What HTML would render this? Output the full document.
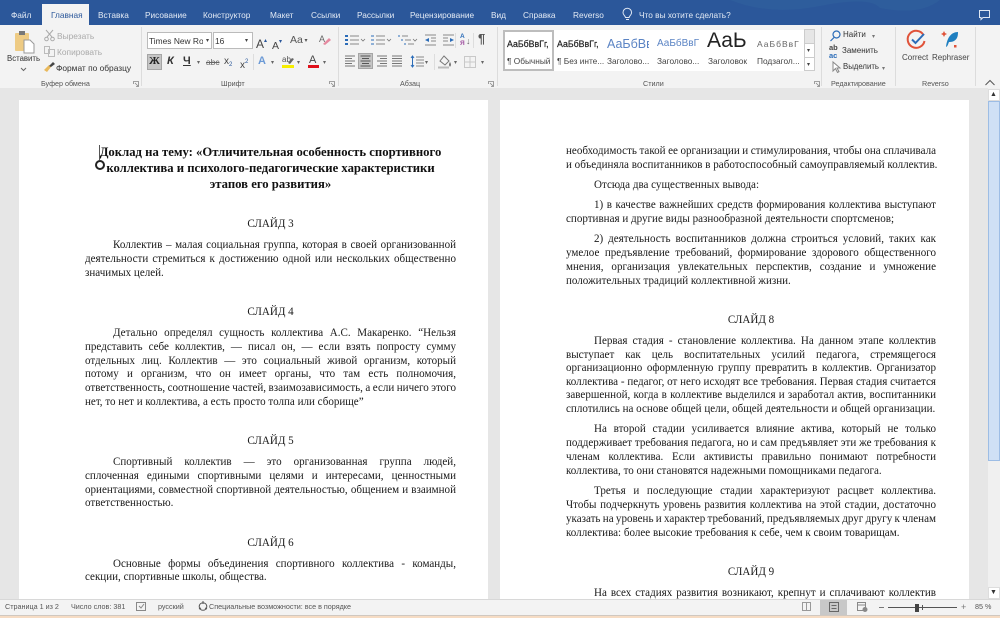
<!DOCTYPE html>
<html lang="ru"><head><meta charset="utf-8"><title>Word</title>
<style>
html,body{margin:0;padding:0;width:1000px;height:618px;overflow:hidden;background:#e6e6e6}
*{box-sizing:border-box}
#r{position:relative;width:1000px;height:618px;overflow:hidden;font-family:"Liberation Sans",sans-serif;filter:blur(.3px)}
.a{position:absolute}
.u{position:absolute;white-space:nowrap;font-size:8.4px;line-height:12px;color:#444}
.e{font-size:8px}
.x{font-size:7.2px;color:#555}
.t{position:absolute;top:9px;white-space:nowrap;font-size:8.3px;line-height:12px;color:#e4ebf5}
.g{position:absolute;top:78px;font-size:7.2px;line-height:11px;color:#555;white-space:nowrap}
.s{position:absolute;top:27px;width:1px;height:59px;background:#dcdcdc}
.p{position:absolute;background:#fff;top:100px;width:469px;height:499px}
.l,.c,.j{position:absolute;font-family:"Liberation Serif",serif;font-size:11.05px;line-height:14px;color:#1a1a1a;white-space:nowrap}
.j{text-align:justify;text-align-last:justify;white-space:normal;height:14px;overflow:hidden;word-spacing:-1px}
.c{text-align:center}
.b{font-weight:bold;font-size:12.7px;line-height:16px;color:#111}
svg{position:absolute;overflow:visible}
</style></head><body><div id="r">

<div class="a" style="left:0;top:0;width:1000px;height:25px;background:#2b579a"></div>
<svg style="left:700px;top:0" width="300" height="25"><path d="M30 0q40 16 90 6t60 2q40 8 60-8z" fill="#30609f" opacity=".6"/></svg>
<div class="a" style="left:0;top:25px;width:1000px;height:63px;background:#f3f3f3"></div>
<div class="a" style="left:42px;top:4px;width:47px;height:21px;background:#f3f3f3"></div>

<div class="t" style="left:11px">Файл</div>
<div class="t" style="left:51px;color:#2b579a">Главная</div>
<div class="t" style="left:98px">Вставка</div>
<div class="t" style="left:145px">Рисование</div>
<div class="t" style="left:203px">Конструктор</div>
<div class="t" style="left:270px">Макет</div>
<div class="t" style="left:311px">Ссылки</div>
<div class="t" style="left:357px">Рассылки</div>
<div class="t" style="left:410px">Рецензирование</div>
<div class="t" style="left:491px">Вид</div>
<div class="t" style="left:523px">Справка</div>
<div class="t" style="left:573px">Reverso</div>
<svg style="left:622px;top:8px" width="11" height="13" fill="none" stroke="#dfe7f3" stroke-width="1"><path d="M3.500 9.500C3 7.500 1 7 1 4.500a4.300 4.300 0 0 1 8.600 0c0 2.500-2 3-2.500 5zM4 11.500h3"/></svg>
<div class="t" style="left:639px">Что вы хотите сделать?</div>
<svg style="left:979px;top:10px" width="12" height="11" fill="none" stroke="#dfe7f3"><path d="M.5.500h10v7H4L2 9.500v-2H.5z"/></svg>

<!-- clipboard -->
<svg style="left:14px;top:30px" width="22" height="24"><rect x="1" y="3" width="14" height="18" rx="1" fill="#eecb84"/><rect x="5" y="1" width="6" height="4" fill="#777"/><path d="M10 10h6l4 4v9H10z" fill="#fff" stroke="#999"/></svg>
<div class="u" style="left:7px;top:53px;color:#333;font-size:7.800px">Вставить</div>
<svg style="left:21px;top:68px" width="5" height="3" fill="none" stroke="#666"><path d="M0 0l2.500 2.500L5 0"/></svg>
<svg style="left:44px;top:30px" width="11" height="11" fill="none" stroke="#aaa"><path d="M2 0l6 7M9 0L3 7"/><circle cx="2.500" cy="9" r="1.800"/><circle cx="8.500" cy="9" r="1.800"/></svg>
<div class="u" style="left:57px;top:30px;color:#aaa">Вырезать</div>
<svg style="left:44px;top:46px" width="11" height="11" fill="none" stroke="#bbb"><path d="M.5.500h5v7h-5zM4.500 3.500h6v7h-6z" fill="#f3f3f3"/></svg>
<div class="u" style="left:57px;top:46px;color:#aaa">Копировать</div>
<svg style="left:44px;top:62px" width="11" height="10"><path d="M0 8l5-5 2 2-4 5z" fill="#e9b95c"/><path d="M5 4l4-4 2 2-4 3z" fill="#444"/></svg>
<div class="u" style="left:56px;top:62px;color:#333">Формат по образцу</div>
<div class="g" style="left:41px">Буфер обмена</div>
<svg style="left:133px;top:81px" width="6" height="6" fill="none" stroke="#888" stroke-width=".8"><path d="M.5 3V.5H5.500V5.500H3M2 2l3 3"/></svg>
<div class="s" style="left:141px"></div>

<!-- font -->
<div class="a" style="left:147px;top:32px;width:65px;height:17px;background:#fff;border:1px solid #bbb"></div>
<div class="u" style="left:149px;top:35px;width:54px;overflow:hidden;color:#333">Times New Roman</div>
<div class="u" style="left:206px;top:35px;font-size:6px">▾</div>
<div class="a" style="left:213px;top:32px;width:40px;height:17px;background:#fff;border:1px solid #bbb"></div>
<div class="u" style="left:215px;top:35px;color:#333">16</div>
<div class="u" style="left:245px;top:35px;font-size:6px">▾</div>
<div class="u" style="left:256px;top:35px;font-size:12px;color:#444">A<span style="font-size:6px;vertical-align:6px;color:#2b579a">▴</span></div>
<div class="u" style="left:272px;top:36px;font-size:10.500px;color:#444">A<span style="font-size:6px;vertical-align:6px;color:#2b579a">▾</span></div>
<div class="u" style="left:290px;top:34px;font-size:10.500px;color:#555">Aa<span style="font-size:6px;vertical-align:1px"> ▾</span></div>
<svg style="left:319px;top:33px" width="12" height="13"><text x="0" y="9" font-size="9" fill="#666" font-family="Liberation Sans">A</text><path d="M4 11l6-6 2 2-6 5z" fill="#e58aa0"/></svg>

<div class="a" style="left:147px;top:54px;width:15px;height:16px;background:#c5c5c5;border:1px solid #a5a5a5"></div>
<div class="u" style="left:149px;top:55px;font-size:11px;font-weight:bold;color:#222;font-family:'Liberation Serif',serif">Ж</div>
<div class="u" style="left:167px;top:55px;font-size:11px;font-weight:bold;font-style:italic;color:#333">К</div>
<div class="u" style="left:183px;top:55px;font-size:11px;font-weight:bold;color:#333;text-decoration:underline">Ч</div>
<div class="u" style="left:197px;top:57px;font-size:6px;color:#666">▾</div>
<div class="u" style="left:206px;top:56px;color:#666;text-decoration:line-through">abc</div>
<div class="u" style="left:224px;top:56px;font-size:10px;color:#444">x<span style="font-size:6px;vertical-align:-2px;color:#2b579a">2</span></div>
<div class="u" style="left:240px;top:56px;font-size:10px;color:#444">x<span style="font-size:6px;vertical-align:5px;color:#2b579a">2</span></div>
<div class="a" style="left:253px;top:54px;width:1px;height:16px;background:#ddd"></div>
<div class="u" style="left:258px;top:55px;font-size:11px;color:#6c9ad6;font-weight:bold">A</div>
<div class="u" style="left:271px;top:57px;font-size:6px;color:#666">▾</div>
<div class="u" style="left:282px;top:54px;font-size:8px;color:#555">ab</div>
<svg style="left:282px;top:57px" width="12" height="11"><path d="M6 6l4-5 2 1-4 5z" fill="#666"/><rect y="8" width="12" height="3" fill="#f6ee00"/></svg>
<div class="u" style="left:297px;top:57px;font-size:6px;color:#666">▾</div>
<div class="u" style="left:309px;top:54px;font-size:11px;color:#444">A</div>
<div class="a" style="left:308px;top:65px;width:11px;height:3px;background:#e0101a"></div>
<div class="u" style="left:323px;top:57px;font-size:6px;color:#666">▾</div>
<div class="g" style="left:221px">Шрифт</div>
<svg style="left:329px;top:81px" width="6" height="6" fill="none" stroke="#888" stroke-width=".8"><path d="M.5 3V.5H5.500V5.500H3M2 2l3 3"/></svg>
<div class="s" style="left:338px"></div>

<!-- paragraph -->
<svg style="left:344px;top:34px" width="135" height="13" fill="none" stroke="#888" stroke-width="1">
<path d="M6 2h9M6 6h9M6 10h9M32 2h9M32 6h9M32 10h9M58 2h6M61 6h6M64 10h6"/>
<path d="M1 2h3M1 6h3M1 10h3" stroke="#2b6cb8" stroke-width="2"/>
<path d="M27 2h3M27 6h3M27 10h3M54 2h2M57 6h2M60 10h2" stroke="#2b6cb8"/>
<path d="M81 1h11M87 4h5M87 7h5M81 11h11M99 1h11M99 4h5M99 7h5M99 11h11"/>
<path d="M81 6l4-2v4zM110 6l-4-2v4z" fill="#2b6cb8" stroke="none"/>
</svg>
<svg style="left:361px;top:39px" width="86" height="4" fill="none" stroke="#777" stroke-width=".8"><path d="M0 0l2 2 2-2M26 0l2 2 2-2M52 0l2 2 2-2"/></svg>
<div class="u" style="left:460px;top:33px;font-size:6.500px;line-height:7px;color:#2b6cb8;font-weight:bold">A<br><span style="color:#a050a0">Я</span></div>
<div class="u" style="left:466px;top:35px;font-size:9px;color:#666">↓</div>
<div class="u" style="left:478px;top:33px;font-size:13px;font-weight:bold;color:#555">¶</div>
<div class="a" style="left:455px;top:33px;width:1px;height:15px;background:#ddd"></div>
<div class="a" style="left:473px;top:33px;width:1px;height:15px;background:#ddd"></div>

<div class="a" style="left:358px;top:53px;width:15px;height:16px;background:#c5c5c5;border:1px solid #a5a5a5"></div>
<svg style="left:345px;top:55px" width="55" height="12" fill="none" stroke="#777" stroke-width="1">
<path d="M0 1h10M0 3.500h7M0 6h10M0 8.500h7M0 11h10"/>
<path d="M15.500 1h10M17 3.500h7M15.500 6h10M17 8.500h7M15.500 11h10" stroke="#555"/>
<path d="M32 1h10M35 3.500h7M32 6h10M35 8.500h7M32 11h10"/>
<path d="M47 1h10M47 3.500h10M47 6h10M47 8.500h10M47 11h10"/>
</svg>
<svg style="left:410px;top:55px" width="14" height="13" fill="none" stroke="#888"><path d="M6 2h8M6 5h8M6 8h8M6 11h8"/><path d="M2.500 1v11M1 3l1.500-2L4 3M1 10l1.500 2L4 10" stroke="#2b6cb8"/></svg>
<div class="u" style="left:425px;top:57px;font-size:6px;color:#666">▾</div>
<div class="a" style="left:434px;top:54px;width:1px;height:16px;background:#ddd"></div>
<svg style="left:438px;top:55px" width="14" height="14" fill="none" stroke="#777"><path d="M6 1l5 5-4 4-5-4z"/><path d="M12 8q1 2 0 3-1-1 0-3z" fill="#777"/><path d="M0 12.500h11" stroke="#bbb" stroke-width="2"/></svg>
<div class="u" style="left:454px;top:57px;font-size:6px;color:#666">▾</div>
<svg style="left:464px;top:56px" width="12" height="12" fill="none" stroke="#c8c8c8"><path d="M.5.500h11v11H.5zM6 .5v11M.5 6h11"/></svg>
<div class="u" style="left:481px;top:57px;font-size:6px;color:#666">▾</div>
<div class="g" style="left:400px">Абзац</div>
<svg style="left:488px;top:81px" width="6" height="6" fill="none" stroke="#888" stroke-width=".8"><path d="M.5 3V.5H5.500V5.500H3M2 2l3 3"/></svg>
<div class="s" style="left:497px"></div>

<!-- styles -->
<div class="a" style="left:503px;top:30px;width:301px;height:41px;background:#fff"></div>
<div class="a" style="left:503px;top:30px;width:51px;height:41px;background:#fff;border:2px solid #bdbdbd"></div>
<div class="u" style="left:507px;top:38px;font-size:8.800px;color:#222;-webkit-text-stroke:.2px #222">АаБбВвГг,</div>
<div class="u" style="left:507px;top:55px;font-size:8.300px">¶ Обычный</div>
<div class="u" style="left:557px;top:38px;font-size:8.800px;color:#222;-webkit-text-stroke:.2px #222">АаБбВвГг,</div>
<div class="u" style="left:557px;top:55px;font-size:8.300px">¶ Без инте...</div>
<div class="u" style="left:607px;top:36px;font-size:12.500px;line-height:16px;width:42px;overflow:hidden;color:#5b84c4">АаБбВв</div>
<div class="u" style="left:607px;top:55px;font-size:8.300px">Заголово...</div>
<div class="u" style="left:657px;top:37px;font-size:10px;line-height:14px;width:44px;overflow:hidden;color:#5b84c4">АаБбВвГ</div>
<div class="u" style="left:657px;top:55px;font-size:8.300px">Заголово...</div>
<div class="u" style="left:707px;top:29px;font-size:21px;line-height:24px;color:#222">АаЬ</div>
<div class="u" style="left:708px;top:55px;font-size:8.300px">Заголовок</div>
<div class="u" style="left:757px;top:38px;font-size:8.500px;letter-spacing:1px;width:44px;overflow:hidden;color:#666">АаБбВвГ</div>
<div class="u" style="left:757px;top:55px;font-size:8.300px">Подзагол...</div>
<div class="a" style="left:804px;top:29px;width:11px;height:42px;background:#fff;border:1px solid #ccc"></div>
<div class="a" style="left:805px;top:30px;width:9px;height:13px;background:#e6e6e6"></div>
<div class="a" style="left:805px;top:57px;width:9px;height:1px;background:#ccc"></div>
<div class="a" style="left:805px;top:43px;width:9px;height:1px;background:#ccc"></div>
<div class="u" style="left:807px;top:45px;font-size:6px;color:#444">▾</div>
<div class="u" style="left:807px;top:59px;font-size:6px;color:#444">▾</div>
<div class="g" style="left:643px">Стили</div>
<svg style="left:814px;top:81px" width="6" height="6" fill="none" stroke="#888" stroke-width=".8"><path d="M.5 3V.5H5.500V5.500H3M2 2l3 3"/></svg>
<div class="s" style="left:821px"></div>

<!-- edit -->
<svg style="left:830px;top:30px" width="11" height="12" fill="none" stroke="#2b6cb8" stroke-width="1.200"><circle cx="6.500" cy="4.500" r="3.500"/><path d="M4 7.500L.5 11"/></svg>
<div class="u e" style="left:843px;top:29px;color:#333">Найти</div>
<div class="u" style="left:872px;top:31px;font-size:6px;color:#777">▾</div>
<div class="u" style="left:829px;top:44px;font-size:7.500px;line-height:8px;color:#444;font-weight:bold">ab<br><span style="color:#2b6cb8">ac</span></div>
<div class="u e" style="left:842px;top:45px;color:#333">Заменить</div>
<svg style="left:832px;top:61px" width="9" height="12" fill="#fff" stroke="#888"><path d="M1 1v9l2.500-2.500 2 4 1.500-.8-2-3.700H8z"/></svg>
<div class="u e" style="left:843px;top:61px;color:#333;font-size:7.800px">Выделить</div>
<div class="u" style="left:882px;top:63px;font-size:6px;color:#777">▾</div>
<div class="g" style="left:831px">Редактирование</div>
<div class="s" style="left:895px"></div>

<!-- reverso -->
<svg style="left:906px;top:30px" width="20" height="20" fill="none" stroke-width="2"><path d="M17.500 5A8.500 8.500 0 1 0 18.500 11" stroke="#e0533a"/><path d="M6 9.500l3.500 3.500L18 4" stroke="#2b6cb8"/></svg>
<div class="u e" style="left:902px;top:52px;color:#444">Correct</div>
<svg style="left:941px;top:30px" width="20" height="20"><path d="M5 17C6 8 10 2 17 2c0 5-1 7-4 9-2 1-4 1-5 1-1 2-1 4-3 5z" fill="#1f7fc0"/><path d="M0 4l2-1 1-2 1 2 2 1-2 1-1 2-1-2zM13 15h2.500v2.500H13z" fill="#e0533a"/></svg>
<div class="u e" style="left:932px;top:52px;color:#444">Rephraser</div>
<div class="g" style="left:922px">Reverso</div>
<div class="s" style="left:975px"></div>
<svg style="left:985px;top:80px" width="10" height="6" fill="none" stroke="#555"><path d="M.5 5L5 .5 9.500 5"/></svg>

<!-- doc -->
<div class="a" style="left:0;top:88px;width:1000px;height:512px;background:#e6e6e6"></div>
<div class="p" style="left:19px"></div>
<div class="p" style="left:500px"></div>

<div class="c b" style="left:85px;width:371px;top:144px">Доклад на тему: «Отличительная особенность спортивного</div>
<div class="c b" style="left:85px;width:371px;top:160px">коллектива и психолого-педагогические характеристики</div>
<div class="c b" style="left:85px;width:371px;top:176px">этапов его развития»</div>
<div class="a" style="left:99px;top:145px;width:1px;height:15px;background:#555"></div>
<div class="a" style="left:95px;top:160px;width:10px;height:10px;border:2px solid #222;border-radius:50%"></div>

<div class="c" style="left:85px;width:371px;top:217px">СЛАЙД 3</div>
<div class="j" style="left:113px;width:343px;top:238px">Коллектив – малая социальная группа, которая в своей организованной</div>
<div class="j" style="left:85px;width:371px;top:252px">деятельности стремиться к достижению одной или нескольких общественно</div>
<div class="l" style="left:85px;top:266px">значимых целей.</div>

<div class="c" style="left:85px;width:371px;top:305px">СЛАЙД 4</div>
<div class="j" style="left:113px;width:343px;top:326px">Детально определял сущность коллектива А.С. Макаренко. “Нельзя</div>
<div class="j" style="left:85px;width:371px;top:340px">представить себе коллектив, — писал он, — если взять попросту сумму</div>
<div class="j" style="left:85px;width:371px;top:354px">отдельных лиц. Коллектив — это социальный живой организм, который</div>
<div class="j" style="left:85px;width:371px;top:367px">потому и организм, что он имеет органы, что там есть полномочия,</div>
<div class="j" style="left:85px;width:371px;top:381px">ответственность, соотношение частей, взаимозависимость, а если ничего этого</div>
<div class="l" style="left:85px;top:395px">нет, то нет и коллектива, а есть просто толпа или сборище”</div>

<div class="c" style="left:85px;width:371px;top:434px">СЛАЙД 5</div>
<div class="j" style="left:113px;width:343px;top:455px">Спортивный коллектив — это организованная группа людей,</div>
<div class="j" style="left:85px;width:371px;top:469px">сплоченная едиными спортивными целями и интересами, ценностными</div>
<div class="j" style="left:85px;width:371px;top:483px">ориентациями, совместной спортивной деятельностью, общением и взаимной</div>
<div class="l" style="left:85px;top:496px">ответственностью.</div>

<div class="c" style="left:85px;width:371px;top:536px">СЛАЙД 6</div>
<div class="j" style="left:113px;width:343px;top:557px">Основные формы объединения спортивного коллектива - команды,</div>
<div class="l" style="left:85px;top:570px">секции, спортивные школы, общества.</div>

<div class="j" style="left:566px;width:370px;top:144px">необходимость такой ее организации и стимулирования, чтобы она сплачивала</div>
<div class="l" style="left:566px;top:158px">и объединяла воспитанников в работоспособный самоуправляемый коллектив.</div>
<div class="l" style="left:594px;top:178px">Отсюда два существенных вывода:</div>
<div class="j" style="left:594px;width:342px;top:198px">1) в качестве важнейших средств формирования коллектива выступают</div>
<div class="l" style="left:566px;top:212px">спортивная и другие виды разнообразной деятельности спортсменов;</div>
<div class="j" style="left:594px;width:342px;top:232px">2) деятельность воспитанников должна строиться условий, таких как</div>
<div class="j" style="left:566px;width:370px;top:246px">умелое предъявление требований, формирование здорового общественного</div>
<div class="j" style="left:566px;width:370px;top:260px">мнения, организация увлекательных перспектив, создание и умножение</div>
<div class="l" style="left:566px;top:274px">положительных традиций коллективной жизни.</div>

<div class="c" style="left:566px;width:370px;top:313px">СЛАЙД 8</div>
<div class="j" style="left:594px;width:342px;top:334px">Первая стадия - становление коллектива. На данном этапе коллектив</div>
<div class="j" style="left:566px;width:370px;top:348px">выступает как цель воспитательных усилий педагога, стремящегося</div>
<div class="j" style="left:566px;width:370px;top:361px">организационно оформленную группу превратить в коллектив. Организатор</div>
<div class="j" style="left:566px;width:370px;top:375px">коллектива - педагог, от него исходят все требования. Первая стадия считается</div>
<div class="j" style="left:566px;width:370px;top:388px">завершенной, когда в коллективе выделился и заработал актив, воспитанники</div>
<div class="l" style="left:566px;top:402px">сплотились на основе общей цели, общей деятельности и общей организации.</div>
<div class="j" style="left:594px;width:342px;top:422px">На второй стадии усиливается влияние актива, который не только</div>
<div class="j" style="left:566px;width:370px;top:436px">поддерживает требования педагога, но и сам предъявляет эти же требования к</div>
<div class="j" style="left:566px;width:370px;top:450px">членам коллектива. Если активисты правильно понимают потребности</div>
<div class="l" style="left:566px;top:464px">коллектива, то они становятся надежными помощниками педагога.</div>
<div class="j" style="left:594px;width:342px;top:484px">Третья и последующие стадии характеризуют расцвет коллектива.</div>
<div class="j" style="left:566px;width:370px;top:498px">Чтобы подчеркнуть уровень развития коллектива на этой стадии, достаточно</div>
<div class="j" style="left:566px;width:370px;top:512px">указать на уровень и характер требований, предъявляемых друг другу к членам</div>
<div class="l" style="left:566px;top:526px">коллектива: более высокие требования к себе, чем к своим товарищам.</div>

<div class="c" style="left:566px;width:370px;top:565px">СЛАЙД 9</div>
<div class="j" style="left:594px;width:342px;top:586px">На всех стадиях развития возникают, крепнут и сплачивают коллектив</div>

<!-- scrollbar -->
<div class="a" style="left:988px;top:88px;width:12px;height:512px;background:#f0f0f0"></div>
<div class="a" style="left:988px;top:89px;width:12px;height:12px;background:#fff;border:1px solid #ddd"></div>
<div class="u" style="left:990px;top:89px;font-size:7px;color:#333">▲</div>
<div class="a" style="left:988px;top:101px;width:12px;height:360px;background:#cfe0f5;border:1px solid #9dbde5"></div>
<div class="a" style="left:988px;top:587px;width:12px;height:12px;background:#fff;border:1px solid #ddd"></div>
<div class="u" style="left:990px;top:587px;font-size:7px;color:#333">▼</div>

<!-- status -->
<div class="a" style="left:0;top:599px;width:1000px;height:16px;background:#f3f3f3;border-top:1px solid #d8d8d8"></div>
<div class="a" style="left:0;top:615px;width:1000px;height:3px;background:#f6dcc4;border-top:1px solid #d0c8c0"></div>
<div class="u x" style="left:5px;top:601px">Страница 1 из 2</div>
<div class="u x" style="left:71px;top:601px">Число слов: 381</div>
<svg style="left:136px;top:602px" width="10" height="9" fill="none" stroke="#888"><path d="M.5.500h9v8h-9zM3 4l2 2 3-4"/></svg>
<div class="u x" style="left:158px;top:601px">русский</div>
<svg style="left:198px;top:601px" width="10" height="11" fill="none" stroke="#555"><circle cx="5" cy="5.500" r="3.800"/><path d="M5 0v3M1 8l2-1M9 8L7 7"/></svg>
<div class="u x" style="left:209px;top:601px">Специальные возможности: все в порядке</div>
<svg style="left:802px;top:602px" width="9" height="9" fill="none" stroke="#999"><path d="M.5.500h8v8h-8zM4.500.5v8"/></svg>
<div class="a" style="left:820px;top:600px;width:27px;height:15px;background:#c8c8c8"></div>
<svg style="left:829px;top:602px" width="10" height="10" fill="none" stroke="#666"><path d="M.5.500h9v9h-9zM2.500 3.500h5M2.500 6.500h5"/></svg>
<svg style="left:857px;top:602px" width="11" height="10" fill="none" stroke="#888"><path d="M.5.500h8v8h-8zM.5 3h8"/><circle cx="8" cy="7.500" r="2" fill="#888"/></svg>
<div class="a" style="left:879px;top:607px;width:5px;height:1px;background:#777"></div>
<div class="a" style="left:888px;top:607px;width:69px;height:1px;background:#555"></div>
<div class="a" style="left:915px;top:604px;width:4px;height:8px;background:#444"></div>
<div class="a" style="left:922px;top:605px;width:1px;height:5px;background:#555"></div>
<div class="u" style="left:961px;top:601px;font-size:9px;color:#777">+</div>
<div class="u x" style="left:975px;top:601px">85 %</div>
</div></body></html>
